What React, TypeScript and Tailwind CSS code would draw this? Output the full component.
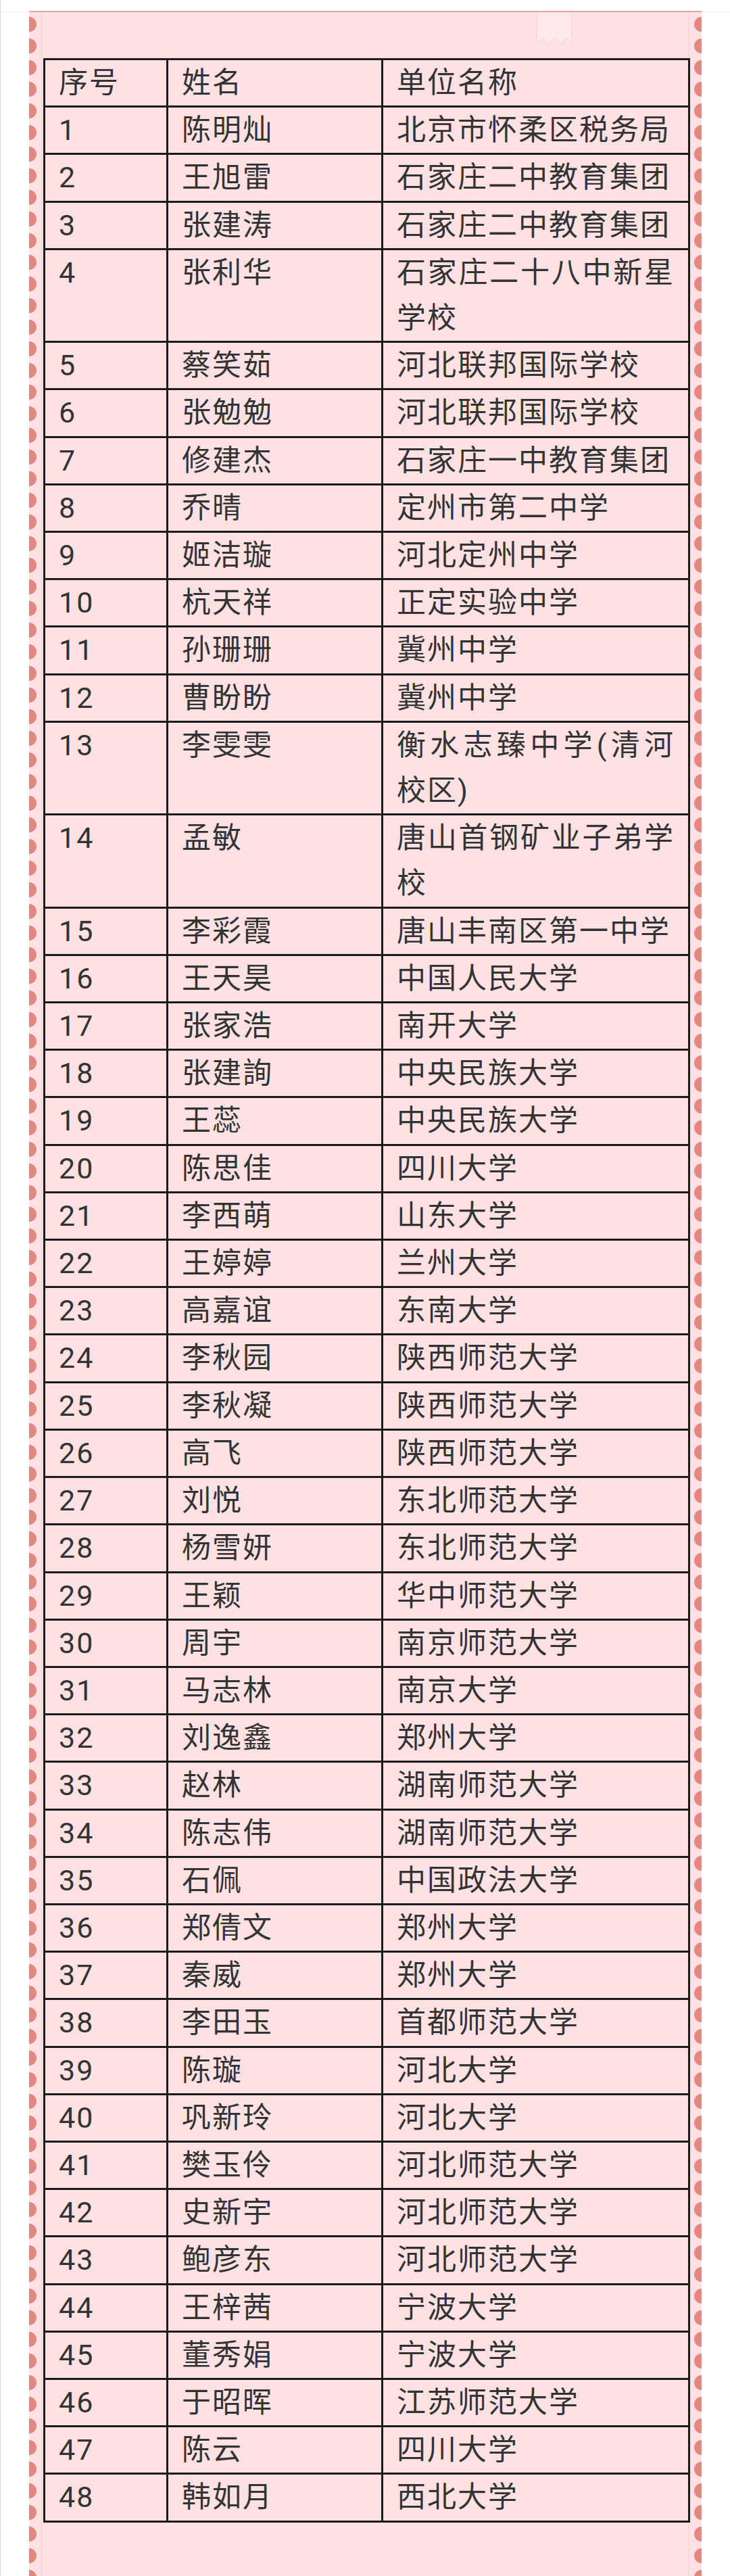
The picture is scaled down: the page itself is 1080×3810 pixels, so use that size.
const rows: [string, string][] = [
  ["陈明灿", "北京市怀柔区税务局"],
  ["王旭雷", "石家庄二中教育集团"],
  ["张建涛", "石家庄二中教育集团"],
  ["张利华", "石家庄二十八中新星学校"],
  ["蔡笑茹", "河北联邦国际学校"],
  ["张勉勉", "河北联邦国际学校"],
  ["修建杰", "石家庄一中教育集团"],
  ["乔晴", "定州市第二中学"],
  ["姬洁璇", "河北定州中学"],
  ["杭天祥", "正定实验中学"],
  ["孙珊珊", "冀州中学"],
  ["曹盼盼", "冀州中学"],
  ["李雯雯", "衡水志臻中学(清河校区)"],
  ["孟敏", "唐山首钢矿业子弟学校"],
  ["李彩霞", "唐山丰南区第一中学"],
  ["王天昊", "中国人民大学"],
  ["张家浩", "南开大学"],
  ["张建詢", "中央民族大学"],
  ["王蕊", "中央民族大学"],
  ["陈思佳", "四川大学"],
  ["李西萌", "山东大学"],
  ["王婷婷", "兰州大学"],
  ["高嘉谊", "东南大学"],
  ["李秋园", "陕西师范大学"],
  ["李秋凝", "陕西师范大学"],
  ["高飞", "陕西师范大学"],
  ["刘悦", "东北师范大学"],
  ["杨雪妍", "东北师范大学"],
  ["王颖", "华中师范大学"],
  ["周宇", "南京师范大学"],
  ["马志林", "南京大学"],
  ["刘逸鑫", "郑州大学"],
  ["赵林", "湖南师范大学"],
  ["陈志伟", "湖南师范大学"],
  ["石佩", "中国政法大学"],
  ["郑倩文", "郑州大学"],
  ["秦威", "郑州大学"],
  ["李田玉", "首都师范大学"],
  ["陈璇", "河北大学"],
  ["巩新玲", "河北大学"],
  ["樊玉伶", "河北师范大学"],
  ["史新宇", "河北师范大学"],
  ["鲍彦东", "河北师范大学"],
  ["王梓茜", "宁波大学"],
  ["董秀娟", "宁波大学"],
  ["于昭晖", "江苏师范大学"],
  ["陈云", "四川大学"],
  ["韩如月", "西北大学"],
];

const cell =
  "border-[3px] border-[#1b1b1b] pl-5 pr-5 py-0 align-top text-justify";

export default function App() {
  return (
    <div className="relative w-[1080px] h-[3810px] overflow-hidden bg-white border-l border-[#d4d4d4] font-['Roboto','Noto_Sans_CJK_SC',sans-serif]">
      {/* thin page rule outside the panel */}
      <div className="absolute left-0 right-0 top-[17px] h-px bg-[#efefef]" />

      <div className="relative ml-[42px] mt-[16px] w-[995px] h-[3794px] bg-[#fde1e3] border-t-2 border-[#eaa39b]">
        {/* scalloped edges */}
        <div className="absolute left-0 top-[2px] bottom-0 w-[12px] bg-[radial-gradient(circle_at_0px_16px,#e3877f_10.5px,transparent_11.5px)] bg-[length:12px_32px]" />
        <div className="absolute right-0 top-[2px] bottom-0 w-[12px] bg-[radial-gradient(circle_at_12px_16px,#e3877f_10.5px,transparent_11.5px)] bg-[length:12px_32px]" />

        {/* ribbon tag */}
        <svg
          className="absolute left-[750px] top-0"
          width="54"
          height="52"
          viewBox="0 0 54 52"
        >
          <polygon
            points="1,0 53,0 53,44 45,38 37,48 28,38 19,48 11,38 1,46"
            fill="#ffe9eb"
            stroke="#f6d2d5"
            strokeWidth="1"
          />
        </svg>

        <div className="ml-[18px] mr-[19px] h-full border-x border-[#f7d0d3] pt-[68px]">
          <table className="ml-[2px] w-[954px] table-fixed border-collapse text-[43px] leading-[67.2px] tracking-[2px] text-[#333333]">
            <colgroup>
              <col className="w-[182px]" />
              <col className="w-[318px]" />
              <col className="w-[454px]" />
            </colgroup>
            <tbody>
              <tr>
                <td className={cell}>序号</td>
                <td className={cell}>姓名</td>
                <td className={cell}>单位名称</td>
              </tr>
              {rows.map(([name, unit], i) => (
                <tr key={i}>
                  <td className={cell}>{i + 1}</td>
                  <td className={cell}>{name}</td>
                  <td className={cell}>{unit}</td>
                </tr>
              ))}
            </tbody>
          </table>
        </div>
      </div>
    </div>
  );
}
